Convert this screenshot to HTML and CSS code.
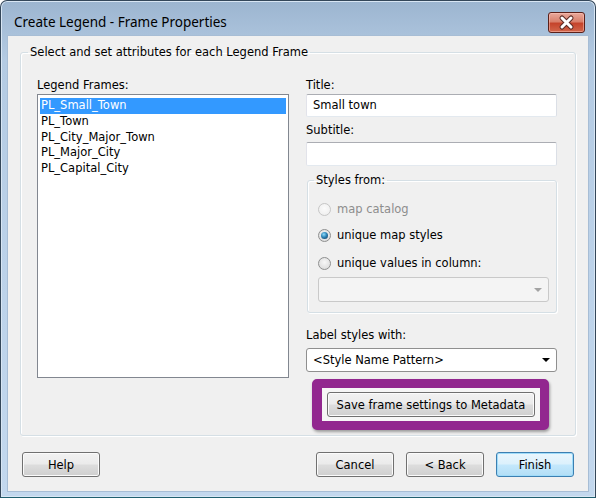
FILE: index.html
```html
<!DOCTYPE html>
<html lang="en">
<head>
  <meta charset="UTF-8">
  <title>Create Legend - Frame Properties</title>
  <link rel="stylesheet" href="styles.css">
</head>
<body>

  <div class="window">
    <div class="titlebar">
      <span class="title">Create Legend - Frame Properties</span>
      <button class="close" title="Close">
        <svg width="37" height="21" viewBox="0 0 37 21">
          <path d="M14 6 L23 15 M23 6 L14 15" stroke="#5a2a24" stroke-width="5" stroke-linecap="round"/>
          <path d="M14 6 L23 15 M23 6 L14 15" stroke="#ffffff" stroke-width="3" stroke-linecap="round"/>
        </svg>
      </button>
    </div>

    <div class="client">
      <fieldset class="group main-group">
        <legend>Select and set attributes for each Legend Frame</legend>
        <div class="columns">

          <div class="col-left">
            <div class="lbl">Legend Frames:</div>
            <ul class="listbox">
              <li class="selected">PL_Small_Town</li>
              <li>PL_Town</li>
              <li>PL_City_Major_Town</li>
              <li>PL_Major_City</li>
              <li>PL_Capital_City</li>
            </ul>
          </div>

          <div class="col-right">
            <div class="lbl">Title:</div>
            <div class="textbox title-box">Small town</div>
            <div class="lbl lbl-sub">Subtitle:</div>
            <div class="textbox sub-box"></div>

            <fieldset class="group styles-group">
              <legend>Styles from:</legend>
              <div class="radio disabled r1"><span class="rb"></span>map catalog</div>
              <div class="radio r2"><span class="rb checked"></span>unique map styles</div>
              <div class="radio r3"><span class="rb"></span>unique values in column:</div>
              <div class="combo disabled"><span class="arrow"></span></div>
            </fieldset>

            <div class="lbl lbl-label">Label styles with:</div>
            <div class="combo">&lt;Style Name Pattern&gt;<span class="arrow"></span></div>

            <div class="highlight">
              <button class="btn save-btn">Save frame settings to Metadata</button>
            </div>
          </div>

        </div>
      </fieldset>

      <div class="buttons">
        <button class="btn">Help</button>
        <span class="spacer"></span>
        <button class="btn">Cancel</button>
        <button class="btn">&lt; Back</button>
        <button class="btn default">Finish</button>
      </div>
    </div>
  </div>

</body>
</html>
```

FILE: styles.css
```css
body {
  margin: 0;
  background-color: #ffffff;
  font-family: "DejaVu Sans", "Liberation Sans", sans-serif;
  font-size: 11.5px;
  color: #000000;
}
.window {
  width: 596px;
  height: 498px;
  box-sizing: border-box;
  border: 1px solid #34475a;
  border-bottom-color: #1f5f70;
  border-radius: 7px 7px 0 0;
  background: linear-gradient(#9cb5d0, #b4cbe3 12%, #bdd3ea 60%, #c3d8ee);
  box-shadow: inset 0 0 0 1px #d8e6f4;
  padding: 0 7px 6px 7px;
  display: flex;
  flex-direction: column;
}
.titlebar {
  height: 35px;
  display: flex;
  align-items: flex-start;
  flex-shrink: 0;
}
.title {
  font-family: "Noto Sans", "Open Sans", sans-serif;
  font-size: 13.5px;
  line-height: 18px;
  margin: 12px 0 0 6px;
  flex: 1;
}
.close {
  width: 37px;
  height: 21px;
  margin: 11px 3px 0 0;
  padding: 0;
  border: 1px solid #5b2019;
  border-radius: 3px;
  background: linear-gradient(#e9a99c, #d9806c 45%, #c5442c 55%, #d2664b);
  box-shadow: inset 0 0 0 1px rgba(255, 200, 190, 0.5);
  display: flex;
  align-items: center;
  justify-content: center;
}
.close svg {
  display: block;
  margin: -1px;
}
.client {
  flex: 1;
  background-color: #f0f0f0;
  box-shadow: 0 0 0 1px #a7bdd5;
  padding: 9px 12px 0 12px;
  display: flex;
  flex-direction: column;
}
.group {
  margin: 0;
  padding: 0;
  border: 1px solid #d5dfe5;
  border-radius: 3px;
  box-shadow: inset 1px 1px 0 #ffffff, 1px 1px 0 #ffffff;
}
.group legend {
  padding: 0 2px;
  line-height: 14px;
}
.main-group {
  height: 391px;
  box-sizing: border-box;
}
.main-group legend {
  margin-left: 7px;
}
.columns {
  display: flex;
  gap: 17px;
  padding: 19px 18px 0 16px;
}
.col-left {
  width: 252px;
}
.col-right {
  width: 251px;
}
.lbl {
  line-height: 14px;
  margin-bottom: 2px;
}
.lbl-sub {
  margin-top: 6px;
  margin-bottom: 5px;
}
.lbl-label {
  margin-top: 15px;
  margin-bottom: 6px;
}
.listbox {
  list-style: none;
  margin: 0;
  height: 284px;
  box-sizing: border-box;
  padding: 3px 2px 2px 2px;
  border: 1px solid #828790;
  background-color: #ffffff;
}
.listbox li {
  height: 15.75px;
  line-height: 15px;
  padding-left: 1px;
}
.listbox li.selected {
  background-color: #3399ff;
  color: #ffffff;
}
.textbox {
  box-sizing: border-box;
  background-color: #ffffff;
  border: 1px solid;
  border-color: #abadb3 #dbdfe6 #e3e9ef #e2e3ea;
  border-radius: 2px;
  padding-left: 6px;
}
.title-box {
  height: 23px;
  line-height: 21px;
}
.sub-box {
  height: 24px;
}
.styles-group {
  margin-top: 8px;
  margin-left: 1px;
  width: 250px;
  box-sizing: border-box;
  padding: 0 7px 10px 10px;
}
.styles-group legend {
  margin-left: -4px;
  line-height: 13px;
}
.radio {
  display: flex;
  align-items: center;
  height: 16px;
}
.r1 {
  margin-top: 14px;
}
.r2 {
  margin-top: 10px;
}
.r3 {
  margin-top: 12px;
}
.radio.disabled {
  color: #8d8d8d;
}
.rb {
  width: 13px;
  height: 13px;
  box-sizing: border-box;
  border-radius: 50%;
  border: 1px solid #8e8f8f;
  background: radial-gradient(circle at 50% 40%, #f7f7f7, #d6d6d6);
  margin-right: 6px;
  display: flex;
  align-items: center;
  justify-content: center;
}
.disabled .rb {
  border-color: #c6c6c6;
  background: radial-gradient(circle at 50% 40%, #fbfbfb, #ececec);
}
.rb.checked::after {
  content: "";
  width: 7px;
  height: 7px;
  border-radius: 50%;
  background: radial-gradient(circle at 40% 35%, #8fdcfb, #2d85b8 45%, #163f63 90%);
}
.combo {
  position: relative;
  height: 24px;
  box-sizing: border-box;
  border: 1px solid #8f8f8f;
  border-radius: 3px;
  background-color: #ffffff;
  line-height: 22px;
  padding-left: 6px;
}
.combo.disabled {
  margin-top: 6px;
  height: 25px;
  border-color: #c9c9c9;
  background-color: #f4f4f4;
}
.arrow {
  position: absolute;
  right: 6px;
  top: 9px;
  border-left: 4px solid transparent;
  border-right: 4px solid transparent;
  border-top: 4px solid #000000;
}
.combo.disabled .arrow {
  border-top-color: #a3a3a3;
  top: 10px;
}
.highlight {
  margin-top: 7px;
  margin-left: 6px;
  width: 237px;
  box-sizing: border-box;
  border: 9px solid #92278f;
  border-left-width: 10px;
  border-radius: 5px;
  padding: 4px 5px;
  background-color: #f6f6f6;
  box-shadow: 1px 2px 3px rgba(0, 0, 0, 0.35);
}
.btn {
  font-family: "DejaVu Sans", "Liberation Sans", sans-serif;
  font-size: 11.5px;
  color: #000000;
  width: 78px;
  height: 25px;
  padding: 0;
  border: 1px solid #707070;
  border-radius: 3px;
  background: linear-gradient(#f2f2f2, #ebebeb 48%, #dddddd 52%, #cfcfcf);
  box-shadow: inset 0 0 0 1px #fbfbfb;
}
.save-btn {
  width: 208px;
  display: block;
}
.buttons {
  display: flex;
  gap: 12px;
  margin-top: 16px;
  padding: 0 2px;
}
.spacer {
  flex: 1;
}
.btn.default {
  border-color: #3c7fb1;
  background: linear-gradient(#eaf6fd, #dcf1fc 48%, #c4e8fc 52%, #b2def6);
  box-shadow: inset 0 0 0 1px #9fdcfa;
}
```
